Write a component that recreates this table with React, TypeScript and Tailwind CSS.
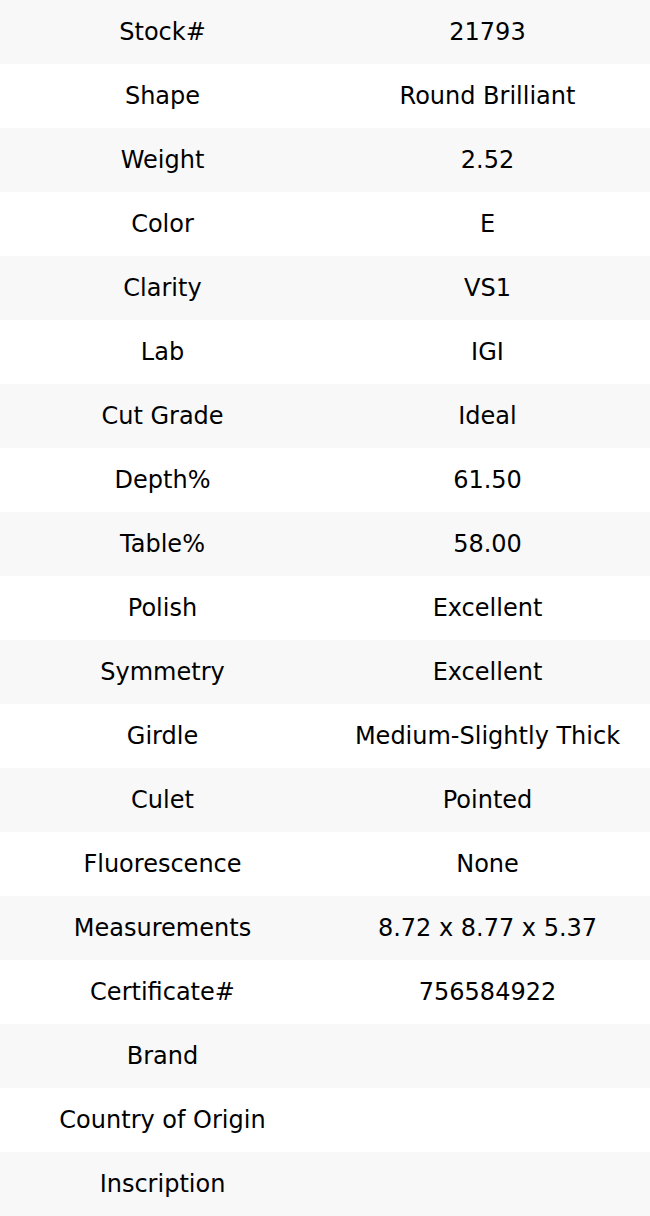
const rows: [string, string][] = [
  ['Stock#', '21793'],
  ['Shape', 'Round Brilliant'],
  ['Weight', '2.52'],
  ['Color', 'E'],
  ['Clarity', 'VS1'],
  ['Lab', 'IGI'],
  ['Cut Grade', 'Ideal'],
  ['Depth%', '61.50'],
  ['Table%', '58.00'],
  ['Polish', 'Excellent'],
  ['Symmetry', 'Excellent'],
  ['Girdle', 'Medium-Slightly Thick'],
  ['Culet', 'Pointed'],
  ['Fluorescence', 'None'],
  ['Measurements', '8.72 x 8.77 x 5.37'],
  ['Certificate#', '756584922'],
  ['Brand', ''],
  ['Country of Origin', ''],
  ['Inscription', ''],
]

export default function App() {
  return (
    <div className="w-[650px] bg-white text-[24px] text-black font-['DejaVu_Sans',sans-serif]">
      {rows.map(([label, value], i) => (
        <div
          key={label}
          className={`grid grid-cols-2 h-16 items-center text-center ${i % 2 === 0 ? 'bg-[#f8f8f8]' : 'bg-white'}`}
        >
          <div>{label}</div>
          <div>{value}</div>
        </div>
      ))}
    </div>
  )
}
